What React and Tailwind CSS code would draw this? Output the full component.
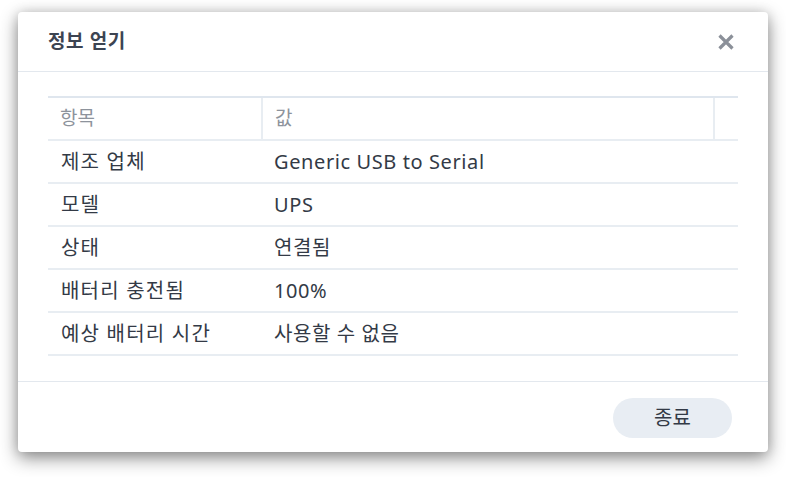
import React from 'react';

const rows = [
  { label: '제조 업체', value: 'Generic USB to Serial' },
  { label: '모델', value: 'UPS' },
  { label: '상태', value: '연결됨' },
  { label: '배터리 충전됨', value: '100%' },
  { label: '예상 배터리 시간', value: '사용할 수 없음' },
];

function CloseIcon() {
  return (
    <svg width="18" height="18" viewBox="0 0 18 18" fill="none">
      <path d="M2.5 2.5L15.5 15.5M15.5 2.5L2.5 15.5" stroke="#8b9099" strokeWidth="3.2" strokeLinecap="butt" />
    </svg>
  );
}

export default function App() {
  return (
    <div
      className="w-[786px] h-[477px] bg-white pt-[12px] pl-[18px]"
      style={{ fontFamily: '"Noto Sans", "Noto Sans CJK KR", sans-serif' }}
    >
      <div className="w-[750px] h-[440px] bg-white rounded-[4px] shadow-[0_6px_18px_rgba(0,0,0,0.45),0_0_12px_rgba(0,0,0,0.12)] flex flex-col">
        {/* Header */}
        <div className="h-[60px] flex items-center justify-between pl-[30px] pr-[33px] border-b border-[#e3e8ee]">
          <h1 className="text-[19px] font-bold text-[#3c4452] tracking-[0.6px]">정보 얻기</h1>
          <button className="bg-transparent border-0 p-0 flex items-center">
            <CloseIcon />
          </button>
        </div>

        {/* Body */}
        <div className="flex-1 px-[30px] pt-[24px]">
          <div className="border-t-2 border-[#dfe6ee]">
            <div className="flex h-[43px] border-b-2 border-[#e8edf2] text-[#8d939c] text-[19px]">
              <div className="w-[213px] flex items-center pl-[12px]">항목</div>
              <div className="flex-1 flex items-center pl-[12px] border-l-2 border-[#e8edf2]">값</div>
              <div className="w-[25px] border-l-2 border-[#e8edf2]"></div>
            </div>
            {rows.map((r) => (
              <div key={r.label} className="flex h-[43px] border-b-2 border-[#e8edf2] text-[#333a46] text-[20px]">
                <div className="w-[213px] flex items-center pl-[13px] tracking-[1.2px]">{r.label}</div>
                <div className="flex-1 flex items-center pl-[13px] tracking-[0.6px]">{r.value}</div>
              </div>
            ))}
          </div>
        </div>

        {/* Footer */}
        <div className="h-[71px] border-t border-[#e3e8ee] flex items-center justify-end pr-[36px]">
          <button className="w-[119px] h-[40px] rounded-full bg-[#e8edf3] text-[20px] text-[#333a46] mt-[2px]">종료</button>
        </div>
      </div>
    </div>
  );
}
